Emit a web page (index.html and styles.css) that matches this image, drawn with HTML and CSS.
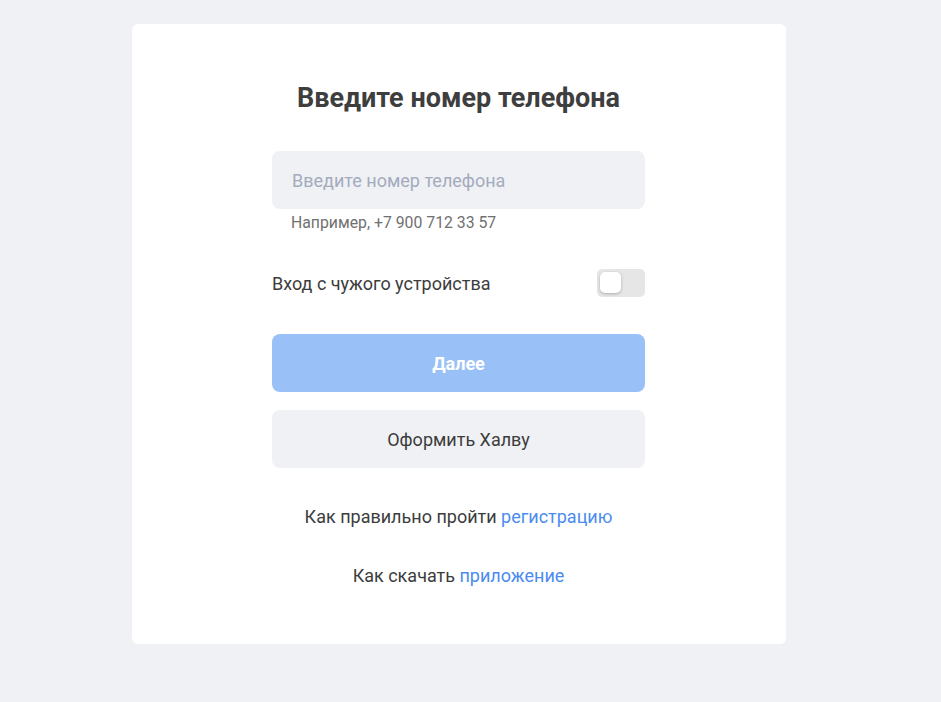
FILE: index.html
```html
<!DOCTYPE html>
<html lang="ru">
<head>
<meta charset="utf-8">
<title>Вход</title>
<link rel="stylesheet" href="styles.css">
</head>
<body>
<div class="card">
  <div class="form">
    <h1 class="title">Введите номер телефона</h1>
    <div class="field">Введите номер телефона</div>
    <div class="hint">Например, +7 900 712 33 57</div>
    <div class="toggle-row">
      <span class="toggle-label">Вход с чужого устройства</span>
      <span class="toggle"><span class="knob"></span></span>
    </div>
    <div class="btn btn-primary">Далее</div>
    <div class="btn btn-secondary">Оформить Халву</div>
    <p class="link-line">Как правильно пройти <a class="link" href="#">регистрацию</a></p>
    <p class="link-line">Как скачать <a class="link" href="#">приложение</a></p>
  </div>
</div>
</body>
</html>
```
FILE: styles.css
```css
html, body {
  margin: 0;
  padding: 0;
}
body {
  background: #f0f1f5;
  font-family: Roboto, "Noto Sans", "Liberation Sans", sans-serif;
  color: #3c3c3c;
  width: 941px;
  height: 702px;
  overflow: hidden;
}
.card {
  box-sizing: border-box;
  margin: 24px 0 0 132px;
  width: 654px;
  height: 620px;
  background: #ffffff;
  border-radius: 6px;
  padding: 58px 0 0 140px;
}
.form {
  width: 373px;
  display: flex;
  flex-direction: column;
}
.title {
  margin: 0;
  font-size: 27px;
  line-height: 32px;
  font-weight: 700;
  text-align: center;
  color: #3e3e3e;
}
.field {
  margin-top: 37px;
  height: 58px;
  box-sizing: border-box;
  background: #f0f1f5;
  border-radius: 8px;
  padding-left: 20px;
  display: flex;
  align-items: center;
  font-size: 18px;
  color: #a3abbd;
}
.hint {
  margin-top: 5px;
  padding-left: 19px;
  font-size: 15.8px;
  line-height: 18px;
  color: #707070;
}
.toggle-row {
  margin-top: 37px;
  height: 28px;
  display: flex;
  align-items: center;
  justify-content: space-between;
}
.toggle-label {
  font-size: 18px;
  color: #3c3c3c;
}
.toggle {
  position: relative;
  width: 48px;
  height: 28px;
  background: #e6e6e6;
  border-radius: 5px;
}
.knob {
  position: absolute;
  left: 3px;
  top: 3px;
  width: 21px;
  height: 21px;
  background: #ffffff;
  border-radius: 5px;
  box-shadow: 0 1px 3px rgba(0, 0, 0, 0.25);
}
.btn {
  height: 58px;
  border-radius: 8px;
  display: flex;
  align-items: center;
  justify-content: center;
  font-size: 18px;
}
.btn-primary {
  margin-top: 37px;
  background: #99c0f7;
  color: #ffffff;
  font-weight: 700;
}
.btn-secondary {
  margin-top: 18px;
  background: #f0f1f5;
  color: #3c3c3c;
}
.link-line {
  margin: 38px 0 0;
  font-size: 18px;
  line-height: 22px;
  text-align: center;
  color: #3c3c3c;
}
.link-line + .link-line {
  margin-top: 37px;
}
.link {
  color: #4b8bf0;
  text-decoration: none;
}
```
